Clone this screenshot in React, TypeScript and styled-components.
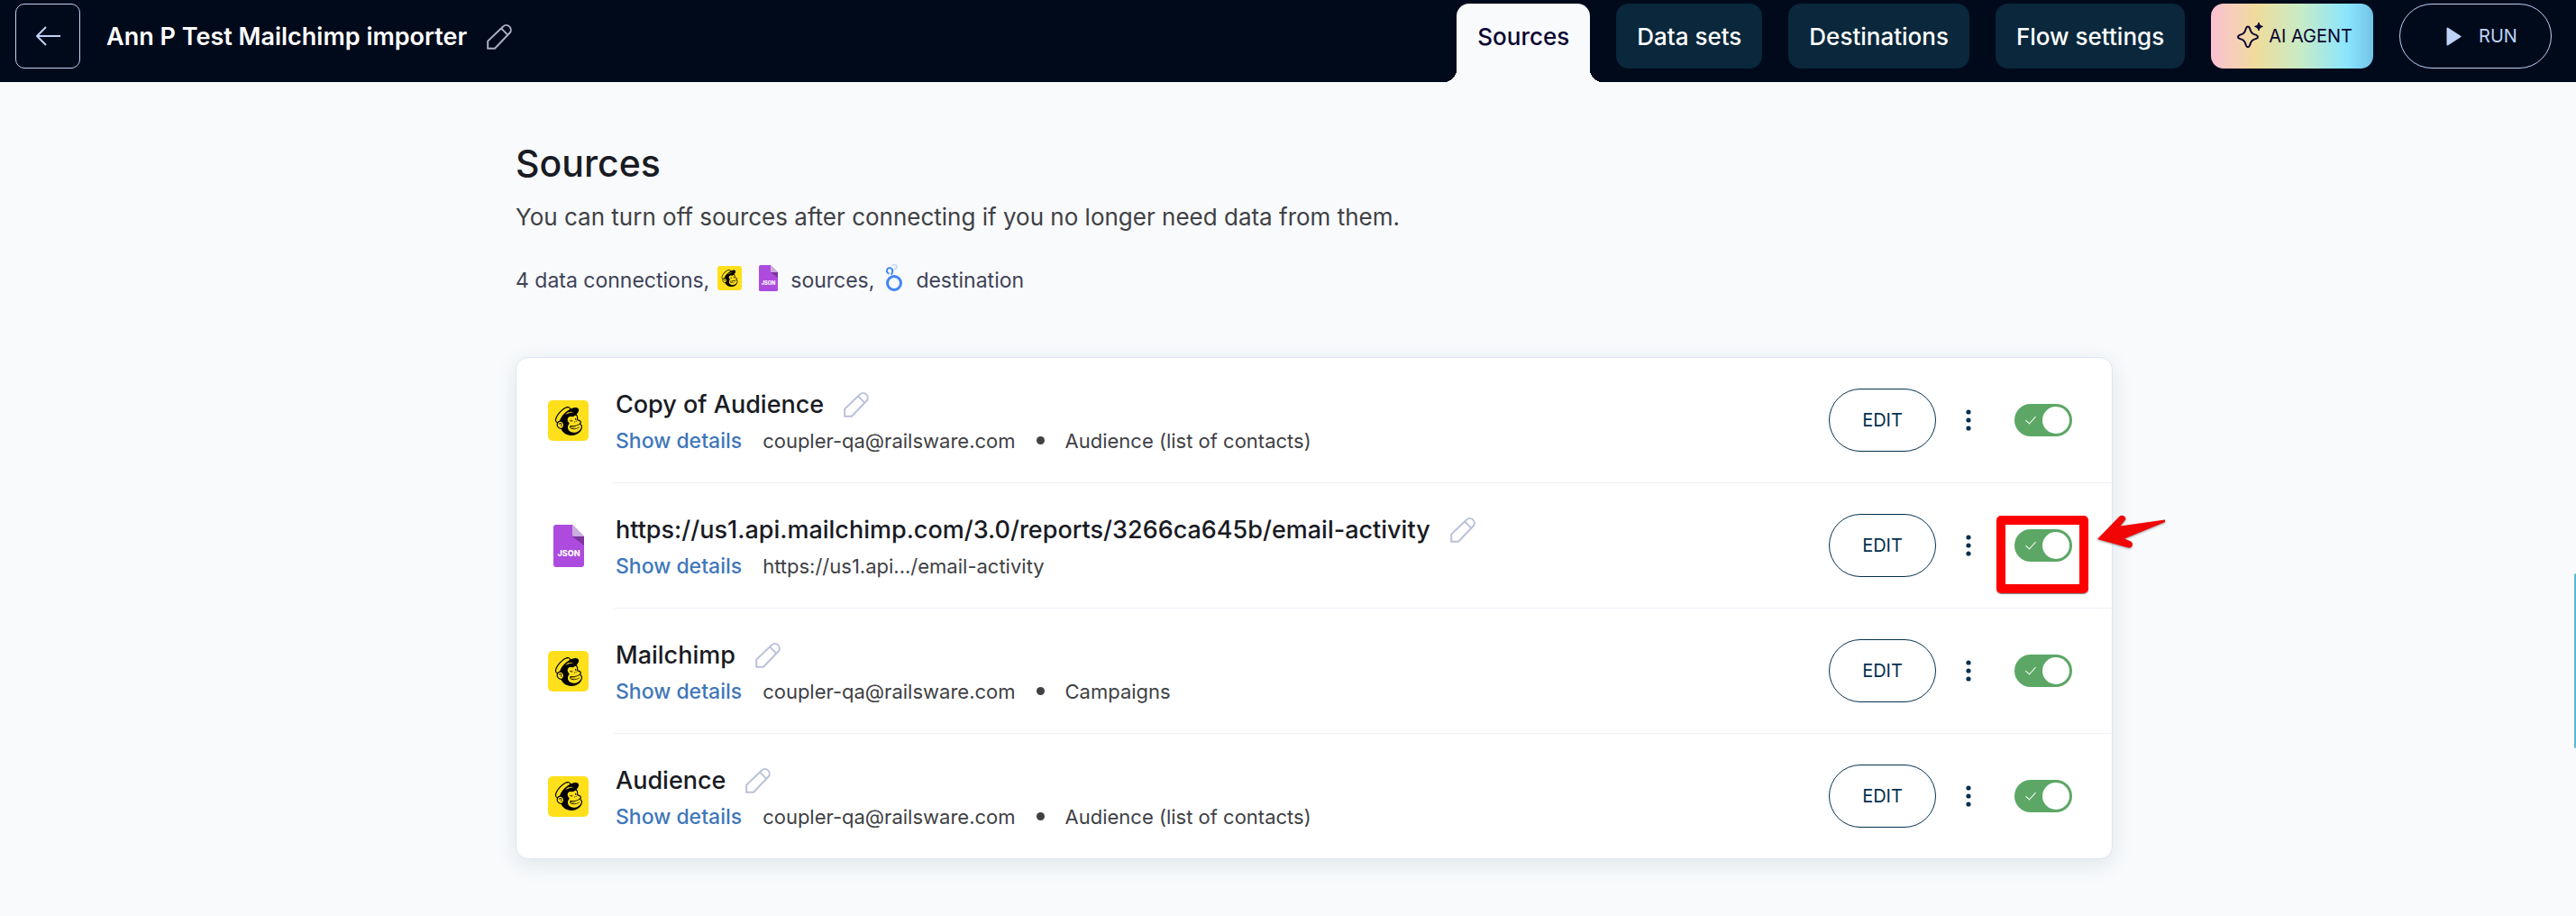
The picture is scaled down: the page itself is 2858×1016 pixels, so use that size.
import React from "react";
import styled, { createGlobalStyle } from "styled-components";
import { SiMailchimp } from "react-icons/si";

const GlobalStyle = createGlobalStyle`
  *, *::before, *::after { box-sizing: border-box; }
  body {
    margin: 0;
    background: #f8fafc;
    color: #404144;
    font-family: Inter, "Liberation Sans", sans-serif;
    font-size: 22px;
    line-height: 32px;
  }
  button, input { font: inherit; margin: 0; }
  button { cursor: pointer; }
`;

const Page = styled.div`
  position: relative;
  min-height: 100vh;
`;

const Header = styled.header`
  display: flex;
  align-items: flex-start;
  gap: 29px;
  padding: 4px 27px 0 17px;
  background: #010a1b;
`;

const BackButton = styled.button`
  display: flex;
  align-items: center;
  justify-content: center;
  width: 72px;
  height: 72px;
  padding: 0;
  border: 1px solid #bcd3f7;
  border-radius: 10px;
  background: transparent;
  color: #bcd3f7;
`;

const FlowName = styled.div`
  display: flex;
  flex: 1;
  align-items: center;
  gap: 22px;
  height: 72px;
  padding-top: 2px;
`;

const FlowTitle = styled.span`
  color: #ffffff;
  font-size: 27px;
  font-weight: 600;
  white-space: nowrap;
`;

const IconButton = styled.button<{ $color: string }>`
  display: flex;
  padding: 0;
  border: 0;
  background: transparent;
  color: ${(p) => p.$color};
`;

const Tabs = styled.nav`
  display: flex;
  align-items: flex-start;
  gap: 29px;
`;

const Tab = styled.a<{ $active?: boolean }>`
  position: relative;
  display: flex;
  padding: 21px 23px 19px;
  height: ${(p) => (p.$active ? "87px" : "72px")};
  border-radius: ${(p) => (p.$active ? "14px 14px 0 0" : "14px")};
  background: ${(p) => (p.$active ? "#f8fafc" : "#0a273b")};
  color: ${(p) => (p.$active ? "#0b0330" : "#ffffff")};
  font-size: 26px;
  font-weight: 500;
  text-decoration: none;
  white-space: nowrap;

  &::before,
  &::after {
    content: ${(p) => (p.$active ? '""' : "none")};
    position: absolute;
    bottom: 0;
    width: 14px;
    height: 14px;
  }
  &::before {
    right: 100%;
    background: radial-gradient(circle at 0 0, transparent 14px, #f8fafc 14px);
  }
  &::after {
    left: 100%;
    background: radial-gradient(circle at 100% 0, transparent 14px, #f8fafc 14px);
  }
`;

const AgentButton = styled.button`
  display: flex;
  align-items: center;
  gap: 6px;
  height: 72px;
  padding: 0 23px 0 28px;
  border: 0;
  border-radius: 14px;
  background: linear-gradient(90deg, #fbc0d3 0%, #efdc9b 28%, #c8ebc5 55%, #8ae5ff 84%, #72c3e6 100%);
  color: #0b0330;
  font-size: 20px;
  white-space: nowrap;
`;

const RunButton = styled.button`
  display: flex;
  align-items: center;
  justify-content: center;
  gap: 19px;
  width: 169px;
  height: 72px;
  padding: 0 0 0 14px;
  border: 1px solid #bcd3f7;
  border-radius: 36px;
  background: transparent;
  color: #bcd3f7;
  font-size: 20px;
`;

const Main = styled.main`
  padding: 66px 0 63px 58px;
`;

const Container = styled.div`
  width: 100%;
  max-width: 1772px;
  margin: 0 auto;
`;

const Heading = styled.h1`
  margin: 0;
  color: #191b23;
  font-size: 41px;
  font-weight: 500;
  line-height: 48px;
`;

const Lead = styled.p`
  margin: 20px 0 0;
  font-size: 26px;
`;

const Summary = styled.div`
  display: flex;
  align-items: center;
  height: 32px;
  margin: 38px 0 69px;
  color: #3f4256;
  font-size: 23px;
`;

const SummaryIcons = styled.span<{ $lead: number }>`
  display: flex;
  align-items: center;
  gap: 19px;
  margin: 0 14px 6px ${(p) => p.$lead}px;
`;

const Card = styled.ul`
  margin: 0;
  padding: 0;
  border: 1px solid #dfe4f3;
  border-radius: 14px;
  background: #ffffff;
  box-shadow: 0 6px 24px rgba(20, 60, 90, 0.1);
  list-style: none;
`;

const Row = styled.li`
  display: flex;
  align-items: stretch;
  padding-left: 35px;
`;

const SourceIcon = styled.div`
  display: flex;
  align-items: center;
  width: 73px;
`;

const MailchimpTile = styled.span<{ $size: number }>`
  display: flex;
  align-items: center;
  justify-content: center;
  width: ${(p) => p.$size}px;
  height: ${(p) => p.$size}px;
  border-radius: ${(p) => (p.$size > 30 ? 5 : 3)}px;
  background: #ffe01b;
  color: #000000;
`;

const RowBody = styled.div`
  display: flex;
  flex: 1;
  align-items: center;
  min-height: 138px;
  padding: 0 44px 0 2px;

  ${Row}:not(:last-child) & {
    min-height: 139px;
    border-bottom: 1px solid #eff1f8;
  }
`;

const RowText = styled.div`
  flex: 1;
  padding-top: 3px;
`;

const RowTitle = styled.div`
  display: flex;
  align-items: center;
  gap: 22px;
  margin-bottom: 6px;
`;

const RowName = styled.h2`
  margin: 0;
  color: #191b23;
  font-size: 27px;
  font-weight: 500;
  line-height: 36px;
`;

const RowMeta = styled.div`
  display: flex;
  align-items: center;
  gap: 23px;
`;

const DetailsButton = styled.button`
  padding: 0;
  border: 0;
  background: transparent;
  color: #3f77ba;
  font-size: 23px;
  font-weight: 500;
`;

const Dot = styled.span`
  width: 9px;
  height: 9px;
  border-radius: 50%;
  background: #404144;
`;

const EditButton = styled.button`
  width: 119px;
  height: 70px;
  padding: 0;
  border: 1px solid #04304f;
  border-radius: 35px;
  background: transparent;
  color: #04304f;
  font-size: 20px;
`;

const MoreButton = styled(IconButton)`
  justify-content: center;
  width: 87px;
  padding-right: 15px;
`;

const ToggleCell = styled.div`
  position: relative;
  display: flex;
`;

const Toggle = styled.input`
  appearance: none;
  display: flex;
  align-items: center;
  justify-content: space-between;
  width: 64px;
  height: 36px;
  padding: 0 3px 0 15px;
  border-radius: 18px;
  background: #a9b2bd;
  cursor: pointer;

  &:checked {
    background: #5ca765;
  }
  &::before {
    content: "";
    width: 6px;
    height: 11px;
    margin-bottom: 3px;
    border: solid #ffffff;
    border-width: 0 1px 1px 0;
    transform: rotate(42deg);
  }
  &::after {
    content: "";
    width: 30px;
    height: 30px;
    border-radius: 50%;
    background: #ffffff;
  }
`;

const Highlight = styled.span`
  position: absolute;
  top: -15px;
  left: -20px;
  width: 102px;
  height: 86px;
  border: 10px solid #ff0000;
  border-radius: 5px;
  box-shadow: 0 1px 1px rgba(0, 0, 0, 0.5);
  pointer-events: none;
`;

const ArrowMark = styled.svg`
  position: absolute;
  top: -16px;
  left: 92px;
  filter: drop-shadow(0 1px 1px rgba(0, 0, 0, 0.4));
`;

const SideHandle = styled.button`
  position: fixed;
  top: 636px;
  right: 0;
  width: 2px;
  height: 194px;
  padding: 0;
  border: 0;
  border-radius: 2px 0 0 2px;
  background: #5cb8d6;
`;

const IndentedIcon = styled.span`
  display: flex;
  padding-left: 6px;
`;

const Pencil = () => (
  <svg width="28" height="28" viewBox="0 0 28 28" fill="none" stroke="currentColor" strokeWidth="2" aria-hidden="true">
    <path d="M1.2 26.8V18.6L18.1 2.6a5 5 0 0 1 7.2 7.2L9 26.8ZM16.3 4.6l6.9 7" />
  </svg>
);

const BackArrow = () => (
  <svg width="28" height="24" viewBox="0 0 28 24" fill="none" stroke="currentColor" strokeWidth="2" strokeLinejoin="round" aria-hidden="true">
    <path d="M12 2 2 12l10 10M2 12h26" />
  </svg>
);

const Sparkle = () => (
  <svg width="30" height="30" viewBox="0 0 30 30" aria-hidden="true">
    <path
      d="M13 4.5c1 0 1.6.7 2 1.8 1.5 5 2.3 6 7.2 7.6 1.2.4 1.8 1 1.8 2s-.6 1.6-1.8 2c-4.9 1.6-5.7 2.6-7.2 7.6-.4 1.1-1 1.8-2 1.8s-1.6-.7-2-1.8c-1.5-5-2.3-6-7.2-7.6-1.2-.4-1.8-1-1.8-2s.6-1.6 1.8-2c4.9-1.6 5.7-2.6 7.2-7.6.4-1.1 1-1.8 2-1.8Z"
      fill="none"
      stroke="currentColor"
      strokeWidth="2"
    />
    <path d="M25 0c.8 2.8 1.6 3.6 4.4 4.4-2.8.9-3.6 1.7-4.4 4.5-.8-2.8-1.6-3.6-4.4-4.5C23.4 3.600 24.2 2.8 25 0Z" fill="currentColor" stroke="currentColor" />
  </svg>
);

const PlayIcon = () => (
  <svg width="17" height="21" viewBox="0 0 17 21" aria-hidden="true">
    <path d="M1.5 1.5v18l14-9Z" fill="currentColor" stroke="currentColor" strokeWidth="2" strokeLinejoin="round" />
  </svg>
);

const MoreDots = () => (
  <svg width="6" height="24" viewBox="0 0 6 24" fill="currentColor" aria-hidden="true">
    <circle cx="3" cy="3" r="2.6" />
    <circle cx="3" cy="12" r="2.6" />
    <circle cx="3" cy="21" r="2.6" />
  </svg>
);

const Mailchimp = ({ size }: { size: number }) => (
  <MailchimpTile $size={size}>
    <SiMailchimp size={Math.round(size * 0.72)} aria-hidden="true" />
  </MailchimpTile>
);

const JsonFile = ({ width, height }: { width: number; height: number }) => (
  <svg width={width} height={height} viewBox="0 0 34 47" aria-label="JSON">
    <path d="M3 0h18l13 13v31a3 3 0 0 1-3 3H3a3 3 0 0 1-3-3V3a3 3 0 0 1 3-3Z" fill="#ac4bde" />
    <path d="M21 13h13v10Z" fill="#7c349f" />
    <path d="M21 0l13 13H23a2 2 0 0 1-2-2Z" fill="#cbaedd" />
    <text x="17" y="35" textAnchor="middle" fill="#ffffff" fontFamily="Inter, sans-serif" fontWeight="800" fontSize="9">
      JSON
    </text>
  </svg>
);

const Looker = () => (
  <svg width="20" height="30" viewBox="0 0 20 30" fill="none" aria-hidden="true">
    <circle cx="10" cy="21" r="7.5" stroke="#4285f4" strokeWidth="3" />
    <path d="M4.5 10.5a3.2 3.2 0 1 1 3.4-1.6L7 11.8" stroke="#4285f4" strokeWidth="2" />
    <path d="M8 1.8a2.5 2.5 0 1 1 2 3.6" stroke="#c9dcfb" strokeWidth="2" />
  </svg>
);

type Source = {
  kind: "mailchimp" | "json";
  name: string;
  account: string;
  entity?: string;
  highlighted?: boolean;
};

const sources: Source[] = [
  { kind: "mailchimp", name: "Copy of Audience", account: "coupler-qa@railsware.com", entity: "Audience (list of contacts)" },
  {
    kind: "json",
    name: "https://us1.api.mailchimp.com/3.0/reports/3266ca645b/email-activity",
    account: "https://us1.api.../email-activity",
    highlighted: true,
  },
  { kind: "mailchimp", name: "Mailchimp", account: "coupler-qa@railsware.com", entity: "Campaigns" },
  { kind: "mailchimp", name: "Audience", account: "coupler-qa@railsware.com", entity: "Audience (list of contacts)" },
];

const SourceRow = ({ source }: { source: Source }) => (
  <Row>
    <SourceIcon>
      {source.kind === "mailchimp" ? (
        <Mailchimp size={45} />
      ) : (
        <IndentedIcon>
          <JsonFile width={34} height={47} />
        </IndentedIcon>
      )}
    </SourceIcon>
    <RowBody>
      <RowText>
        <RowTitle>
          <RowName>{source.name}</RowName>
          <IconButton $color="#b9c1da" aria-label={`Rename ${source.name}`}>
            <Pencil />
          </IconButton>
        </RowTitle>
        <RowMeta>
          <DetailsButton>Show details</DetailsButton>
          <span>{source.account}</span>
          {source.entity && (
            <>
              <Dot />
              <span>{source.entity}</span>
            </>
          )}
        </RowMeta>
      </RowText>
      <EditButton>EDIT</EditButton>
      <MoreButton $color="#04304f" aria-label="More actions">
        <MoreDots />
      </MoreButton>
      <ToggleCell>
        <Toggle type="checkbox" role="switch" defaultChecked aria-label={`Enable ${source.name}`} />
        {source.highlighted && (
          <>
            <Highlight />
            <ArrowMark width="76" height="38" viewBox="0 0 76 38" aria-hidden="true">
              <path d="M0 27 24.5 1.8C27-.8 32.5 1.5 31 5.5L25.5 12.5 75 5.5V8L30 26.5 37 29.5C41 32 38 37.5 34.5 36.5Z" fill="#f20505" />
            </ArrowMark>
          </>
        )}
      </ToggleCell>
    </RowBody>
  </Row>
);

export default function App() {
  return (
    <>
      <GlobalStyle />
      <Page>
        <Header>
          <BackButton aria-label="Back">
            <BackArrow />
          </BackButton>
          <FlowName>
            <FlowTitle>Ann P Test Mailchimp importer</FlowTitle>
            <IconButton $color="#aab0bf" aria-label="Rename flow">
              <Pencil />
            </IconButton>
          </FlowName>
          <Tabs>
            <Tab href="#sources" $active aria-current="page">Sources</Tab>
            <Tab href="#data-sets">Data sets</Tab>
            <Tab href="#destinations">Destinations</Tab>
            <Tab href="#flow-settings">Flow settings</Tab>
          </Tabs>
          <AgentButton>
            <Sparkle />
            AI AGENT
          </AgentButton>
          <RunButton>
            <PlayIcon />
            RUN
          </RunButton>
        </Header>
        <Main>
          <Container>
            <Heading>Sources</Heading>
            <Lead>You can turn off sources after connecting if you no longer need data from them.</Lead>
            <Summary>
              <span>4 data connections,</span>
              <SummaryIcons $lead={9}>
                <Mailchimp size={27} />
                <JsonFile width={21} height={29} />
              </SummaryIcons>
              <span>sources,</span>
              <SummaryIcons $lead={12}>
                <Looker />
              </SummaryIcons>
              <span>destination</span>
            </Summary>
            <Card>
              {sources.map((source) => (
                <SourceRow key={source.name} source={source} />
              ))}
            </Card>
          </Container>
        </Main>
        <SideHandle aria-label="Open side panel" />
      </Page>
    </>
  );
}
